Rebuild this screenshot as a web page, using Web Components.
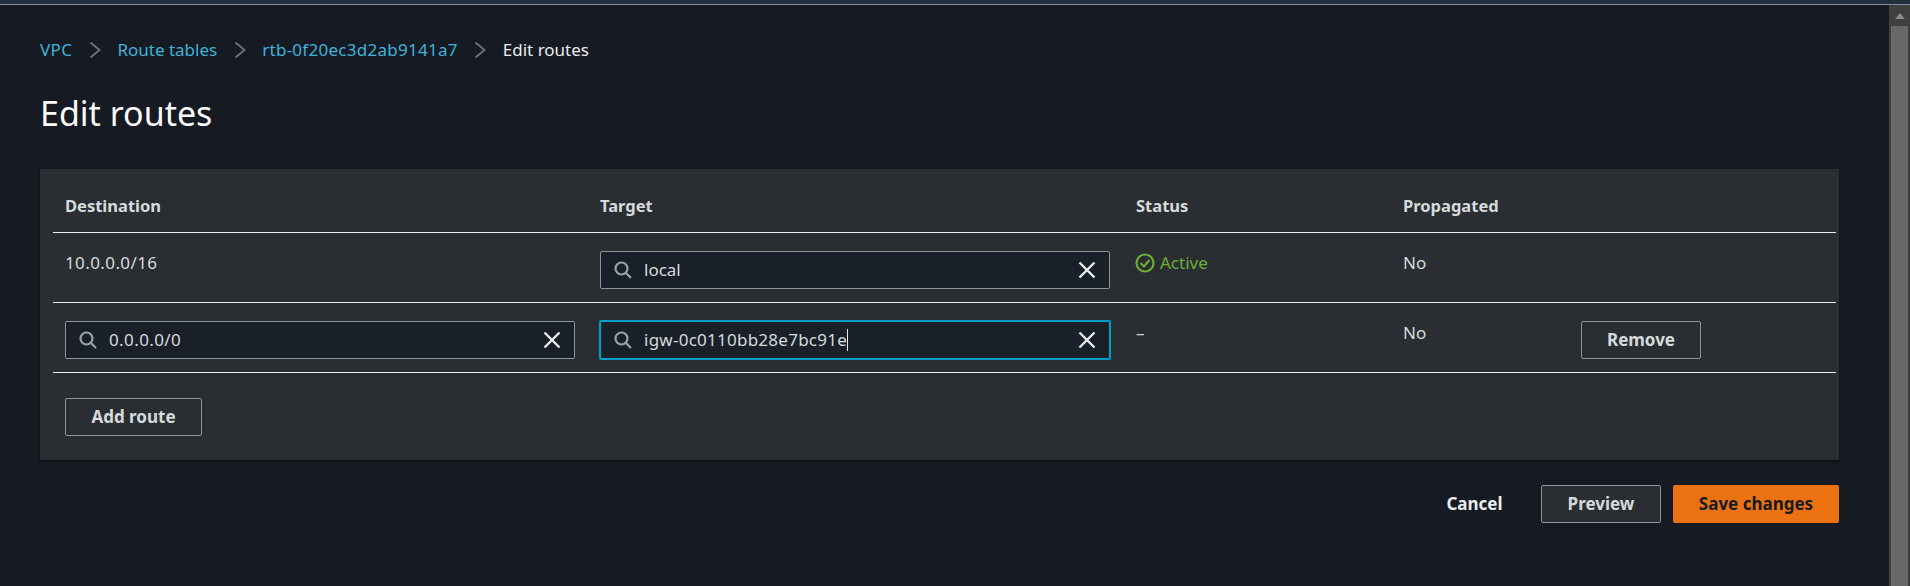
<!DOCTYPE html>
<html lang="en">
<head>
<meta charset="utf-8">
<title>Edit routes</title>
<style>
  html, body { margin: 0; height: 100%; overflow: hidden; background: #161a23; }
  body { font: 17px/22px "Noto Sans", sans-serif; color: #d5dbdb; }
</style>
</head>
<body>
<console-page>
  <bread-crumbs slot="crumbs">
    <a>VPC</a>
    <a>Route tables</a>
    <a>rtb-0f20ec3d2ab9141a7</a>
    <span>Edit routes</span>
  </bread-crumbs>
  <route-table>
    <route-row head>
      <span>Destination</span><span>Target</span><span>Status</span><span>Propagated</span>
    </route-row>
    <route-row>
      <span style="letter-spacing:.4px">10.0.0.0/16</span>
      <search-input value="local"></search-input>
      <status-active>Active</status-active>
      <span>No</span>
    </route-row>
    <route-row>
      <search-input value="0.0.0.0/0" style="letter-spacing:.4px"></search-input>
      <search-input value="igw-0c0110bb28e7bc91e" focused style="letter-spacing:.25px"></search-input>
      <span>–</span>
      <span>No</span>
      <aws-button style="width:120px">Remove</aws-button>
    </route-row>
    <aws-button slot="add" style="width:137px">Add route</aws-button>
  </route-table>
  <aws-button slot="actions" variant="link">Cancel</aws-button>
  <aws-button slot="actions" style="width:120px;background:#2a2e33">Preview</aws-button>
  <aws-button slot="actions" variant="primary" style="width:166px">Save changes</aws-button>
</console-page>

<script>
// small helper, every element below just sets its own shadow html
class Base extends HTMLElement {
  constructor() {
    super();
    this.attachShadow({ mode: 'open' });
  }
}

class ConsolePage extends Base {
  connectedCallback() {
    this.shadowRoot.innerHTML = `
      <style>
        :host { display: flex; flex-direction: column; height: 586px; }
        .top { flex: none; height: 4px; background: #232f3e; border-bottom: 1px solid #7d8998; }
        .body { flex: 1; display: flex; min-height: 0; }
        main { flex: 1; min-width: 0; padding: 33px 50px 0 40px; }
        h1 { margin: 31px 0 36px; font-size: 34px; line-height: 40px; font-weight: 400; color: #fafafa; }
        .actions { display: flex; justify-content: flex-end; align-items: center; margin-top: 25px; gap: 12px; }
        .bar { flex: none; width: 21px; background: #3f3f3f; display: flex; flex-direction: column; align-items: center; }
        .arrow { flex: none; height: 21px; display: flex; align-items: center; justify-content: center; }
        .thumb { flex: 1; width: 17px; background: #686868; }
      </style>
      <div class="top"></div>
      <div class="body">
        <main>
          <slot name="crumbs"></slot>
          <h1>Edit routes</h1>
          <slot></slot>
          <div class="actions"><slot name="actions"></slot></div>
        </main>
        <div class="bar">
          <div class="arrow"><svg width="10" height="6" viewBox="0 0 10 6"><path d="M5 0 L10 6 H0 Z" fill="#8a8a8a"/></svg></div>
          <div class="thumb"></div>
        </div>
      </div>`;
  }
}

class BreadCrumbs extends Base {
  connectedCallback() {
    const items = [...this.children];
    const chevron = `<svg width="12" height="18" viewBox="0 0 12 18"><path d="M1.5 1.5 L10.5 9 L1.5 16.5" fill="none" stroke="#687078" stroke-width="2"/></svg>`;
    this.shadowRoot.innerHTML = `
      <style>
        :host { display: flex; align-items: center; height: 24px; }
        span { color: #3fb3d9; }
        span.vpc { letter-spacing: .4px; }
        span.id { letter-spacing: .27px; }
        span.cur { color: #eaeded; }
        svg { margin: 0 16.5px; display: block; }
      </style>
      ${items.map((el, i) => {
        const text = el.textContent;
        const cls = el.tagName === 'SPAN' ? 'cur' : text === 'VPC' ? 'vpc' : text.startsWith('rtb') ? 'id' : '';
        return `<span class="${cls}">${text}</span>${i < items.length - 1 ? chevron : ''}`;
      }).join('')}`;
  }
}

class RouteTable extends Base {
  connectedCallback() {
    this.shadowRoot.innerHTML = `
      <style>
        :host { display: block; background: #2a2e33; padding: 0 3px 26px 13px; height: 291px; box-sizing: border-box; box-shadow: 0 1px 2px #0b0d11; }
        .add { padding: 25px 0 0 12px; }
      </style>
      <slot></slot>
      <div class="add"><slot name="add"></slot></div>`;
  }
}

class RouteRow extends Base {
  connectedCallback() {
    this.shadowRoot.innerHTML = `
      <style>
        :host { display: grid; grid-template-columns: 535px 536px 267px 178px 1fr; box-sizing: border-box; height: 70px; padding: 18px 12px 0; border-bottom: 1px solid #e9ebed; }
        :host([head]) { height: 64px; padding-top: 25px; font-weight: 700; font-size: 16.5px; }
        ::slotted(search-input) { width: 510px; }
        ::slotted(span) { padding-top: 1px; }
      </style>
      <slot></slot>`;
  }
}

class SearchInput extends Base {
  connectedCallback() {
    const focused = this.hasAttribute('focused');
    this.shadowRoot.innerHTML = `
      <style>
        :host { display: flex; align-items: center; box-sizing: border-box; height: 38px; background: #1a2029; border: 1px solid #879596; border-radius: 2px; padding: 0 13px 0 13px; color: #d5dbdb; }
        :host([focused]) { border: 2px solid #00a1c9; margin: -1px; height: 40px; padding: 0 13px 0 13px; width: 512px !important; }
        .val { flex: 1; margin-left: 12px; min-width: 0; }
        .caret { display: inline-block; width: 1px; height: 22px; background: #eaeded; vertical-align: -5px; }
        svg { display: block; flex: none; }
      </style>
      <svg width="18" height="18" viewBox="0 0 18 18"><circle cx="7.5" cy="7.5" r="6" fill="none" stroke="#95a5a6" stroke-width="2.2"/><path d="M12 12 L17 17" stroke="#95a5a6" stroke-width="2.2"/></svg>
      <span class="val">${this.getAttribute('value')}${focused ? '<span class="caret"></span>' : ''}</span>
      <svg width="18" height="18" viewBox="0 0 18 18"><path d="M1.5 1.5 L16.5 16.5 M16.5 1.5 L1.5 16.5" stroke="#eaeded" stroke-width="2.4"/></svg>`;
  }
}

class StatusActive extends Base {
  connectedCallback() {
    this.shadowRoot.innerHTML = `
      <style>
        :host { display: flex; align-items: center; gap: 5px; color: #6aaf35; height: 22px; padding-top: 1px; }
        svg { display: block; margin-left: -1px; }
      </style>
      <svg width="20" height="20" viewBox="0 0 20 20" fill="none" stroke="#6aaf35" stroke-width="2.2"><circle cx="10" cy="10" r="8.5"/><path d="M5.5 10 L9 13.5 L14.5 7"/></svg>
      <slot></slot>`;
  }
}

class AwsButton extends Base {
  connectedCallback() {
    this.shadowRoot.innerHTML = `
      <style>
        :host { display: flex; align-items: center; justify-content: center; box-sizing: border-box; height: 38px; border: 1px solid #879596; border-radius: 2px; font-weight: 700; color: #d5dbdb; }
        :host([variant=primary]) { background: #ec7211; border-color: #ec7211; color: #16191f; }
        :host([variant=link]) { border-color: transparent; color: #eaeded; width: 83px; margin-right: 13px; }
      </style>
      <slot></slot>`;
  }
}

customElements.define('console-page', ConsolePage);
customElements.define('bread-crumbs', BreadCrumbs);
customElements.define('route-table', RouteTable);
customElements.define('route-row', RouteRow);
customElements.define('search-input', SearchInput);
customElements.define('status-active', StatusActive);
customElements.define('aws-button', AwsButton);
</script>
</body>
</html>
